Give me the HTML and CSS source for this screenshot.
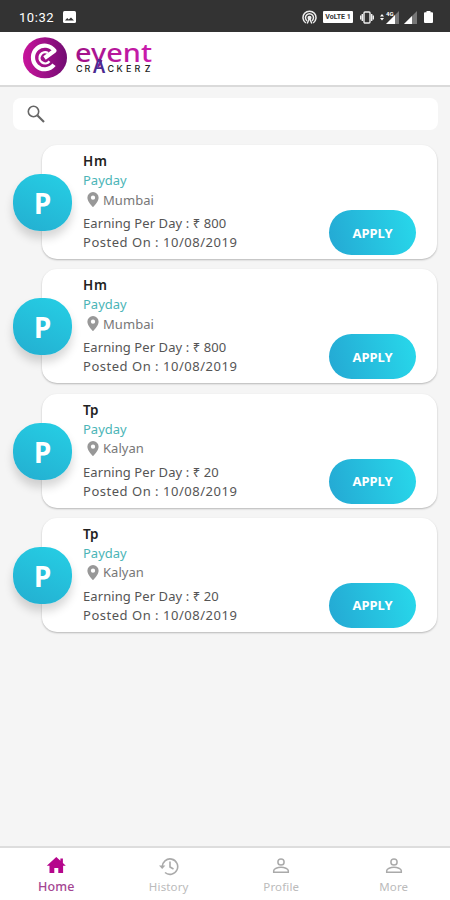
FILE: index.html
```
<!DOCTYPE html>
<html lang="en">
<head>
<meta charset="utf-8">
<title>Event Crackerz</title>
<link rel="stylesheet" href="styles.css">
</head>
<body>
<svg width="0" height="0" class="defs">
  <defs>
    <linearGradient id="brand" x1="0" x2="1"><stop offset="0" stop-color="#c8149c"/><stop offset="1" stop-color="#720c72"/></linearGradient>
    <linearGradient id="word" x1="0" x2="1"><stop offset="0" stop-color="#a01088"/><stop offset="1" stop-color="#cc1cae"/></linearGradient>
    <symbol id="pin" viewBox="0 0 12 16"><path fill="#989898" fill-rule="evenodd" d="M6 0a6 6 0 0 0-6 6c0 4.300 6 10 6 10s6-5.700 6-10a6 6 0 0 0-6-6Zm0 3.700a2.300 2.300 0 1 1 0 4.600 2.300 2.300 0 0 1 0-4.600Z"/></symbol>
    <symbol id="person" viewBox="0 0 18 18"><g fill="none" stroke="#aaa" stroke-width="1.500"><circle cx="9" cy="5" r="3.100"/><path d="M1.700 15.200v-1.500c0-2 4-3.400 7.300-3.400s7.300 1.400 7.300 3.400v1.500Z"/></g></symbol>
  </defs>
</svg>
<div class="screen">
  <header class="status">
    <span class="clock">10:32</span>
    <svg class="photo" width="13" height="12" viewBox="0 0 13 12"><rect width="13" height="12" rx="1.500" fill="#fff"/><path d="M2 9.500 4.200 7l1.500 1.500L8 6.500l3 3Z" fill="#333"/></svg>
    <svg class="cast" width="15" height="15" viewBox="0 0 15 15" fill="none" stroke="#eee" stroke-width="1.500"><path d="M3.800 13A6.500 6.500 0 1 1 11.200 13M5 10.800a4 4 0 1 1 5 0"/><circle cx="7.500" cy="7.800" r="1.300" fill="#eee"/><path d="m7.500 8-2.300 5.500M7.500 8l2.300 5.500"/></svg>
    <span class="volte">VoLTE 1</span>
    <svg class="vibrate" width="14" height="13" viewBox="0 0 14 13" fill="none" stroke="#eee" stroke-width="1.400"><rect x="4" y="1" width="6" height="11" rx="1"/><path d="M2.300 3v7M11.700 3v7M.6 4.500v4M13.400 4.500v4"/></svg>
    <svg class="signal4g" width="19" height="14" viewBox="0 0 19 14"><path fill="#777" d="M19 1v13H6Z"/><path fill="#fff" d="M15 5v9H6ZM0 6.500 2 4l2 2.500ZM0 8h4l-2 2.500Z"/><text x="6" y="5.500" class="tiny">4G</text></svg>
    <svg class="signal" width="13" height="13" viewBox="0 0 13 13"><path fill="#777" d="M13 0v13H0Z"/><path fill="#fff" d="M8 5v8H0Z"/></svg>
    <svg class="battery" width="9" height="12" viewBox="0 0 9 12"><path fill="#fff" d="M2.500 0h4v1.200H8a1 1 0 0 1 1 1V11a1 1 0 0 1-1 1H1a1 1 0 0 1-1-1V2.200a1 1 0 0 1 1-1h1.500Z"/></svg>
  </header>

  <div class="topbar">
    <svg width="134" height="44" viewBox="0 0 134 44">
      <ellipse cx="22" cy="21.700" rx="22" ry="20.500" fill="url(#brand)"/>
      <path d="M31 28.800A11.800 11.800 0 1 1 31.500 14.800L21.500 22" fill="none" stroke="#fff" stroke-width="4.200" stroke-linejoin="round"/>
      <path d="M26.500 25.300A5.600 5.600 0 1 1 25 17" fill="none" stroke="#fff" stroke-width="2.400"/>
      <text x="52" y="25.500" textLength="77" lengthAdjust="spacingAndGlyphs" class="wordmark">event</text>
      <path d="m78.500 24-3.500 7" stroke="#8b1a90" stroke-width="2.300"/>
      <text y="35.500" class="subword"><tspan x="53 61.500">CR</tspan><tspan x="69.500" y="36.500" class="bigletter">A</tspan><tspan x="84.500 93.500 103 111.500 121.800" y="35.500">CKERZ</tspan></text>
    </svg>
  </div>

  <main>
    <div class="search"><svg width="18" height="18" viewBox="0 0 18 18" fill="none" stroke="#666"><circle cx="6.500" cy="6.500" r="5.200" stroke-width="1.600"/><path d="m10.500 10.500 6.500 6.500" stroke-width="2.100"/></svg></div>
    <section class="jobs">
      <article class="job"><div class="avatar">P</div><div class="info"><h2 class="hm">Hm</h2><p class="type">Payday</p><p class="place"><svg width="12" height="15"><use href="#pin"/></svg><span>Mumbai</span></p><p class="pay">Earning Per Day : <span>₹ 800</span></p><p class="date">Posted On : 10/08/2019</p></div><button class="apply">APPLY</button></article>
      <article class="job"><div class="avatar">P</div><div class="info"><h2 class="hm">Hm</h2><p class="type">Payday</p><p class="place"><svg width="12" height="15"><use href="#pin"/></svg><span>Mumbai</span></p><p class="pay">Earning Per Day : <span>₹ 800</span></p><p class="date">Posted On : 10/08/2019</p></div><button class="apply">APPLY</button></article>
      <article class="job"><div class="avatar">P</div><div class="info"><h2>Tp</h2><p class="type">Payday</p><p class="place"><svg width="12" height="15"><use href="#pin"/></svg><span>Kalyan</span></p><p class="pay">Earning Per Day : <span>₹ 20</span></p><p class="date">Posted On : 10/08/2019</p></div><button class="apply">APPLY</button></article>
      <article class="job"><div class="avatar">P</div><div class="info"><h2>Tp</h2><p class="type">Payday</p><p class="place"><svg width="12" height="15"><use href="#pin"/></svg><span>Kalyan</span></p><p class="pay">Earning Per Day : <span>₹ 20</span></p><p class="date">Posted On : 10/08/2019</p></div><button class="apply">APPLY</button></article>
    </section>
  </main>

  <nav>
    <a class="tab active"><svg width="20" height="20" viewBox="0 0 20 20"><path fill="#b5068c" d="M10.300 1 .8 9.800H3.500V17H8.300v-5h4v5h4.800V9.800h2.700l-2.900-2.700V2.500h-2.500v2.300Z"/></svg><span>Home</span></a>
    <a class="tab history"><svg width="20" height="20" viewBox="0 0 20 20" fill="none" stroke="#aaa" stroke-width="1.600"><path d="M3.300 11A7.700 7.700 0 1 1 6 16.500M11 5.500V11l3.500 2"/><path d="M0 9.500h6.400L3.200 13Z" fill="#aaa" stroke="none"/></svg><span>History</span></a>
    <a class="tab"><svg width="18" height="18"><use href="#person"/></svg><span>Profile</span></a>
    <a class="tab"><svg width="18" height="18"><use href="#person"/></svg><span>More</span></a>
  </nav>
</div>
</body>
</html>
```
FILE: styles.css
```
* { box-sizing: border-box; }
body { margin: 0; font-family: "Noto Sans", sans-serif; }
.defs { display: block; }
.screen { width: 450px; height: 900px; display: flex; flex-direction: column; background: #f5f5f5; overflow: hidden; }
.status { height: 32px; flex: none; background: #333; display: flex; align-items: center; padding: 2px 17px 0 19px; color: #fff; }
.clock { font: 13px Roboto, sans-serif; letter-spacing: .55px; width: 44px; }
.cast { margin-left: auto; margin-right: 6px; }
.volte { width: 30px; height: 12px; background: #fff; border-radius: 1px; color: #333; font: bold 7px/12px Roboto, sans-serif; text-align: center; margin-right: 7px; }
.vibrate { margin-right: 6px; }
.signal4g { margin-right: 5px; }
.signal { margin-right: 7px; }
.tiny { font: bold 6px Roboto, sans-serif; fill: #fff; }
.topbar { height: 55px; flex: none; background: #fff; border-bottom: 2px solid #dadada; padding: 4px 0 0 23px; }
.topbar svg { display: block; }
.wordmark { font: 500 25.500px "Noto Sans", sans-serif; fill: url(#word); }
.subword { font: 500 9px Inter, sans-serif; fill: #222; }
.bigletter { font: 600 18px Inter, sans-serif; fill: #4a2a91; }
main { flex: 1; padding: 11px 12px 0 13px; }
.search { height: 32px; background: #fff; border-radius: 8px; padding: 7px 14px; }
.search svg { display: block; }
.jobs { display: flex; flex-direction: column; gap: 10.300px; margin: 15px 1px 0 0; }
.job { height: 114px; margin-left: 29px; background: #fff; border-radius: 15px; display: flex; box-shadow: 0 1px 2px rgba(0,0,0,.26); }
.avatar { width: 59px; height: 57px; margin: 29px 11px 0 -29px; flex: none; border-radius: 27px; background: linear-gradient(25deg, #23aed0, #26cfe5); color: #fff; font: 700 28px/58px "Open Sans", sans-serif; text-align: center; box-shadow: 0 7px 10px rgba(0,0,0,.16); }
.info { flex: 1; padding-top: 7px; color: #555; font-size: 13px; white-space: nowrap; }
h2, p { margin: 0; }
h2 { font-size: 13.500px; font-weight: 600; line-height: 19px; color: #222; }
.hm { letter-spacing: .8px; }
.type { line-height: 19px; color: #4bb5b7; letter-spacing: 0; }
.place { display: flex; align-items: center; height: 19px; gap: 4px; padding-left: 4px; color: #777; letter-spacing: .05px; }
.pay { margin-top: 5px; line-height: 19px; letter-spacing: .08px; }
.date { line-height: 19px; letter-spacing: .52px; }
.apply { width: 87px; height: 45px; margin: 65px 21px 0 0; padding: 0; border: 0; border-radius: 23px; background: linear-gradient(75deg, #24a8d3, #28d9eb); color: #fff; font: 700 13px "Noto Sans", sans-serif; }
nav { height: 54px; flex: none; background: #fff; border-top: 2px solid #ddd; display: grid; grid-template-columns: repeat(4, 1fr); }
.tab { display: flex; flex-direction: column; align-items: center; color: #bbb; font-size: 11.500px; padding-top: 9px; letter-spacing: .15px; }
.tab span { line-height: 16px; margin-top: 4px; }
.active, .history { padding-top: 8px; }
.active span, .history span { margin-top: 3px; }
.active { color: #a44592; font-size: 12.500px; font-weight: 500; }
```
